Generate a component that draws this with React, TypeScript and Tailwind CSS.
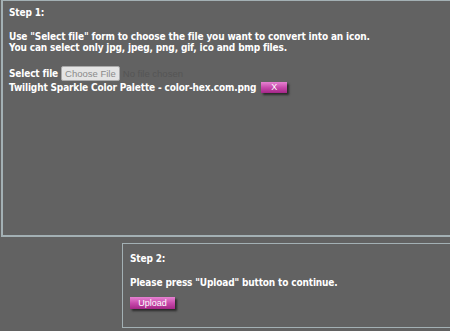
// Icon converter upload steps

export default function App() {
  return (
    <div className="h-[331px] w-[450px] overflow-hidden bg-[#626262] font-['DejaVu_Sans_Condensed',sans-serif] text-[10px] font-bold leading-[11px] tracking-[-0.15px] text-white">
      <div className="ml-[1px] h-[237px] w-[470px] border-2 border-r-0 border-t-[1px] border-[#a3b0b4] px-[6px] pt-[6px]">
        <div>Step 1:</div>
        <div className="mt-[13px]">
          Use &quot;Select file&quot; form to choose the file you want to convert into an icon.
          <br />
          You can select only jpg, jpeg, png, gif, ico and bmp files.
        </div>
        <div className="mt-[13px] flex items-center gap-[3px]">
          <span>Select file</span>
          <span className="flex h-[15px] items-center rounded-[2px] border border-[#a9a9a9] bg-[#e4e4e4] px-[3px] font-['Liberation_Sans',sans-serif] text-[9.5px] font-normal tracking-normal text-[#8a8a8a]">
            Choose File
          </span>
          <span className="font-['Liberation_Sans',sans-serif] text-[9.5px] font-normal tracking-normal text-[#555555]">No file chosen</span>
        </div>
        <div className="mt-[1px] flex items-center gap-[5px]">
          <span>Twilight Sparkle Color Palette - color-hex.com.png</span>
          <button className="flex h-[11px] w-[26px] items-center justify-center bg-gradient-to-b from-[#e682d2] via-[#c84aac] to-[#a52688] font-['Liberation_Sans',sans-serif] text-[9px] font-normal leading-none tracking-normal text-white shadow-[2px_2px_2px_#2a2a2a]">
            X
          </button>
        </div>
      </div>
      <div className="ml-[122px] mt-[6px] h-[85px] w-[340px] border border-r-0 border-[#a3b0b4] pl-[7px] pt-[9px]">
        <div>Step 2:</div>
        <div className="mt-[13px]">Please press &quot;Upload&quot; button to continue.</div>
        <button className="mt-[9px] flex h-[12px] w-[45px] items-center justify-center bg-gradient-to-b from-[#e682d2] via-[#c84aac] to-[#a52688] font-['Liberation_Sans',sans-serif] text-[9px] font-normal leading-none tracking-normal text-white shadow-[2px_2px_2px_#2a2a2a]">
          Upload
        </button>
      </div>
    </div>
  );
}
